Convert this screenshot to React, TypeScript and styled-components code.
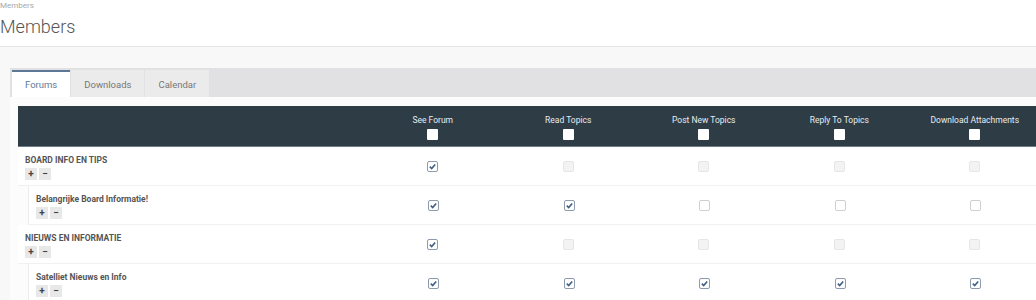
import React from "react";
import styled, { createGlobalStyle } from "styled-components";

type State = "on" | "off" | "locked";

interface ForumRow {
  title: string;
  child?: boolean;
  perms: State[];
}

const columns = [
  "See Forum",
  "Read Topics",
  "Post New Topics",
  "Reply To Topics",
  "Download Attachments",
];

const rows: ForumRow[] = [
  { title: "BOARD INFO EN TIPS", perms: ["on", "locked", "locked", "locked", "locked"] },
  { title: "Belangrijke Board Informatie!", child: true, perms: ["on", "on", "off", "off", "off"] },
  { title: "NIEUWS EN INFORMATIE", perms: ["on", "locked", "locked", "locked", "locked"] },
  { title: "Satelliet Nieuws en Info", child: true, perms: ["on", "on", "on", "on", "on"] },
];

const Check = ({ state }: { state: State }) => (
  <Box $state={state}>
    {state === "on" && (
      <svg width="9" height="9" viewBox="0 0 10 10">
        <path d="M2 5.2 L4.1 7.2 L8 2.8" fill="none" stroke="#3f5f86" strokeWidth="1.8" />
      </svg>
    )}
  </Box>
);

const App: React.FC = () => {
  return (
    <>
      <GlobalStyle />
      <PageHeader>
        <Crumb>Members</Crumb>
        <Title>Members</Title>
      </PageHeader>
      <Main>
        <TabBar>
          <Tab $active>Forums</Tab>
          <Tab>Downloads</Tab>
          <Tab>Calendar</Tab>
        </TabBar>
        <Panel>
          <Grid>
            <HeadCell />
            {columns.map((c) => (
              <HeadCell key={c}>
                <span>{c}</span>
                <HeadBox />
              </HeadCell>
            ))}
          </Grid>
          {rows.map((r) => (
            <Row key={r.title} $child={r.child}>
              <NameCell>
                <Name>{r.title}</Name>
                <Toggles>
                  <Toggle>+</Toggle>
                  <Toggle>−</Toggle>
                </Toggles>
              </NameCell>
              {r.perms.map((p, i) => (
                <PermCell key={i}>
                  <Check state={p} />
                </PermCell>
              ))}
            </Row>
          ))}
        </Panel>
      </Main>
    </>
  );
};

export default App;

const GlobalStyle = createGlobalStyle`
  body {
    margin: 0;
    background: #f8f8f8;
    font-family: Roboto, "Open Sans", sans-serif;
    overflow: hidden;
  }
`;

const PageHeader = styled.div`
  background: #fff;
  height: 47px;
  border-bottom: 1px solid #e6e6e6;
  box-sizing: border-box;
  padding-top: 1px;
`;

const Crumb = styled.div`
  font-size: 8px;
  color: #a8a8a8;
  line-height: 10px;
`;

const Title = styled.h1`
  margin: 5px 0 0;
  font-size: 18px;
  font-weight: 300;
  color: #555;
  line-height: 22px;
`;

const Main = styled.div`
  padding: 21px 0 0 10px;
`;

const TabBar = styled.div`
  display: flex;
  align-items: flex-end;
  background: #e1e1e3;
  height: 29px;
  padding-left: 2px;
`;

const Tab = styled.div<{ $active?: boolean }>`
  height: 27px;
  box-sizing: border-box;
  display: flex;
  align-items: center;
  justify-content: center;
  padding: 0 13px;
  font-size: 9.5px;
  margin-right: 1px;
  color: ${(p) => (p.$active ? "#5b7c9c" : "#777")};
  background: ${(p) => (p.$active ? "#fff" : "#ebebeb")};
  border-top: 2px solid ${(p) => (p.$active ? "#5d7896" : "#ebebeb")};
`;

const Panel = styled.div`
  background: #fcfcfc;
  padding: 9px 0 0 8px;
`;

const Grid = styled.div`
  display: grid;
  grid-template-columns: 347px repeat(5, 135.5px);
  background: #2e3c46;
  height: 41px;
  border-bottom: 1px solid #6e7c88;
  box-sizing: border-box;
`;

const HeadCell = styled.div`
  display: flex;
  flex-direction: column;
  align-items: center;
  padding-top: 9px;
  gap: 4px;
  font-size: 8.5px;
  color: #e8ecef;
  white-space: nowrap;
`;

const HeadBox = styled.div`
  width: 11px;
  height: 11px;
  background: #fff;
  border-radius: 1px;
`;

const Row = styled.div<{ $child?: boolean }>`
  display: grid;
  grid-template-columns: ${(p) => (p.$child ? "337px" : "347px")} repeat(5, 135.5px);
  margin-left: ${(p) => (p.$child ? "10px" : "0")};
  border-left: ${(p) => (p.$child ? "1px solid #ececec" : "none")};
  background: #fff;
  height: 39px;
  box-sizing: border-box;
  border-bottom: 1px solid #f1f1f1;
`;

const NameCell = styled.div`
  padding: 8px 0 0 7px;
  display: flex;
  flex-direction: column;
  gap: 3px;
`;

const Name = styled.div`
  font-size: 8.5px;
  font-weight: 700;
  color: #555;
  line-height: 10px;
`;

const Toggles = styled.div`
  display: flex;
  gap: 2px;
`;

const Toggle = styled.div`
  width: 12px;
  height: 12px;
  background: #e8e8e8;
  color: #444;
  font-size: 10px;
  font-weight: 700;
  display: flex;
  align-items: center;
  justify-content: center;
  line-height: 1;
`;

const PermCell = styled.div`
  display: flex;
  align-items: center;
  justify-content: center;
  padding-top: 1px;
`;

const Box = styled.div<{ $state: State }>`
  width: 11px;
  height: 11px;
  box-sizing: border-box;
  border-radius: 2px;
  display: flex;
  align-items: center;
  justify-content: center;
  background: ${(p) => (p.$state === "locked" ? "#f3f3f3" : "#fff")};
  border: 1px solid
    ${(p) => (p.$state === "on" ? "#8d9bad" : p.$state === "off" ? "#cfcfcf" : "#e6e6e6")};
`;
